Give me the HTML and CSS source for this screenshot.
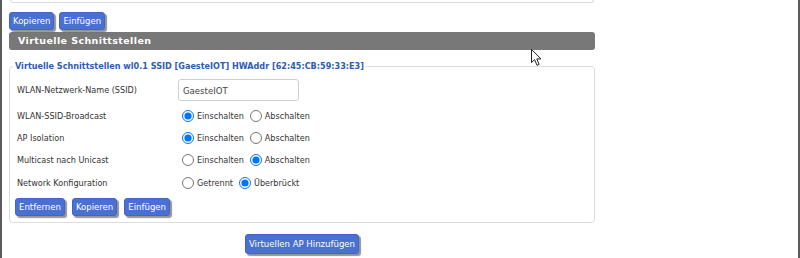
FILE: index.html
```html
<!DOCTYPE html>
<html lang="de">
<head>
<meta charset="utf-8">
<title>Virtuelle Schnittstellen</title>
<link rel="stylesheet" href="styles.css">
</head>
<body>
<div class="page">
  <div class="content">
    <div class="prev"></div>
    <div class="toolbar">
      <button class="btn">Kopieren</button>
      <button class="btn">Einfügen</button>
    </div>
    <div class="header">Virtuelle Schnittstellen</div>
    <fieldset class="group">
      <legend>Virtuelle Schnittstellen wl0.1 SSID [GaesteIOT] HWAddr [62:45:CB:59:33:E3]</legend>
      <div class="row first">
        <span class="label">WLAN-Netzwerk-Name (SSID)</span>
        <input class="text" type="text" value="GaesteIOT">
      </div>
      <div class="row">
        <span class="label">WLAN-SSID-Broadcast</span>
        <div class="opts">
          <label class="opt"><input type="radio" name="b" checked><span>Einschalten</span></label>
          <label class="opt"><input type="radio" name="b"><span>Abschalten</span></label>
        </div>
      </div>
      <div class="row">
        <span class="label">AP Isolation</span>
        <div class="opts">
          <label class="opt"><input type="radio" name="i" checked><span>Einschalten</span></label>
          <label class="opt"><input type="radio" name="i"><span>Abschalten</span></label>
        </div>
      </div>
      <div class="row">
        <span class="label">Multicast nach Unicast</span>
        <div class="opts">
          <label class="opt"><input type="radio" name="m"><span>Einschalten</span></label>
          <label class="opt"><input type="radio" name="m" checked><span>Abschalten</span></label>
        </div>
      </div>
      <div class="row last">
        <span class="label">Network Konfiguration</span>
        <div class="opts">
          <label class="opt"><input type="radio" name="n"><span>Getrennt</span></label>
          <label class="opt"><input type="radio" name="n" checked><span>Überbrückt</span></label>
        </div>
      </div>
      <div class="actions">
        <button class="btn">Entfernen</button>
        <button class="btn">Kopieren</button>
        <button class="btn">Einfügen</button>
      </div>
    </fieldset>
    <div class="add">
      <button class="btn big">Virtuellen AP Hinzufügen</button>
    </div>
  </div>
  <svg class="cursor" width="12" height="18" viewBox="0 0 12 18">
    <path d="M0.5 0.5 L0.5 13.5 L3.6 10.6 L6 16.3 L8.1 15.4 L5.8 9.9 L10 9.9 Z" fill="#fff" stroke="#222" stroke-width="1" stroke-linejoin="round"/>
  </svg>
</div>
</body>
</html>
```

FILE: styles.css
```css
html, body {
  margin: 0;
  padding: 0;
  background: #fff;
}

body {
  font-family: "DejaVu Sans Condensed", "DejaVu Sans", sans-serif;
  font-size: 9px;
  color: #333;
}

.page {
  position: relative;
  box-sizing: border-box;
  width: 800px;
  height: 258px;
  border-left: 2px solid #5c5c5c;
  border-right: 2px solid #5c5c5c;
  padding-left: 7px;
  overflow: hidden;
}

.content {
  width: 586px;
}

.prev {
  height: 2px;
  margin: 0 1px;
  border: 1px solid #dcdcdc;
  border-top: none;
  border-radius: 0 0 4px 4px;
}

.toolbar {
  display: flex;
  gap: 5px;
  margin-top: 9px;
}

.btn {
  font-family: "DejaVu Sans Condensed", "DejaVu Sans", sans-serif;
  font-size: 9.5px;
  color: #fff;
  background: #4a70d2;
  border: 1px solid #4065c6;
  border-radius: 3px;
  height: 18px;
  padding: 0 3px;
  line-height: 16px;
  box-shadow: 2px 2px 1px rgba(60, 60, 60, 0.55);
  cursor: pointer;
}

.header {
  margin-top: 2px;
  height: 18px;
  line-height: 18px;
  background: #787878;
  border-radius: 3px;
  color: #fff;
  font-family: "DejaVu Sans", sans-serif;
  font-weight: bold;
  font-size: 9.5px;
  letter-spacing: 0.4px;
  padding-left: 9px;
}

.group {
  margin: 10px 0 0 0;
  padding: 7px 7px 6px 7px;
  border: 1px solid #dcdcdc;
  border-radius: 4px;
  min-width: 0;
}

.group legend {
  margin-left: -4px;
  padding: 0 2px;
  height: 12px;
  line-height: 12px;
  font-weight: bold;
  font-size: 9px;
  color: #2d5cb3;
}

.row {
  display: grid;
  grid-template-columns: 161px 1fr;
  align-items: center;
  height: 22px;
}

.row.first {
  margin-bottom: 4px;
}

.row.last {
  margin-top: 1px;
}

.label {
  color: #333;
}

.text {
  box-sizing: border-box;
  width: 121px;
  height: 22px;
  border: 1px solid #cfcfcf;
  border-radius: 3px;
  padding: 0 4px;
  font-family: "DejaVu Sans Condensed", "DejaVu Sans", sans-serif;
  font-size: 9.5px;
  color: #444;
  outline: none;
}

.opts {
  display: flex;
  align-items: center;
}

.opt {
  display: inline-flex;
  align-items: center;
  margin-right: 2px;
}

.opt input {
  width: 12px;
  height: 12px;
  margin: 0 3px 0 4px;
}

.actions {
  display: flex;
  gap: 7px;
  margin-top: 4px;
  margin-left: -2px;
}

.add {
  display: flex;
  justify-content: center;
  margin-top: 11px;
}

.btn.big {
  height: 20px;
  line-height: 18px;
  padding: 0 3px;
}

.cursor {
  position: absolute;
  left: 529px;
  top: 49px;
}
```
